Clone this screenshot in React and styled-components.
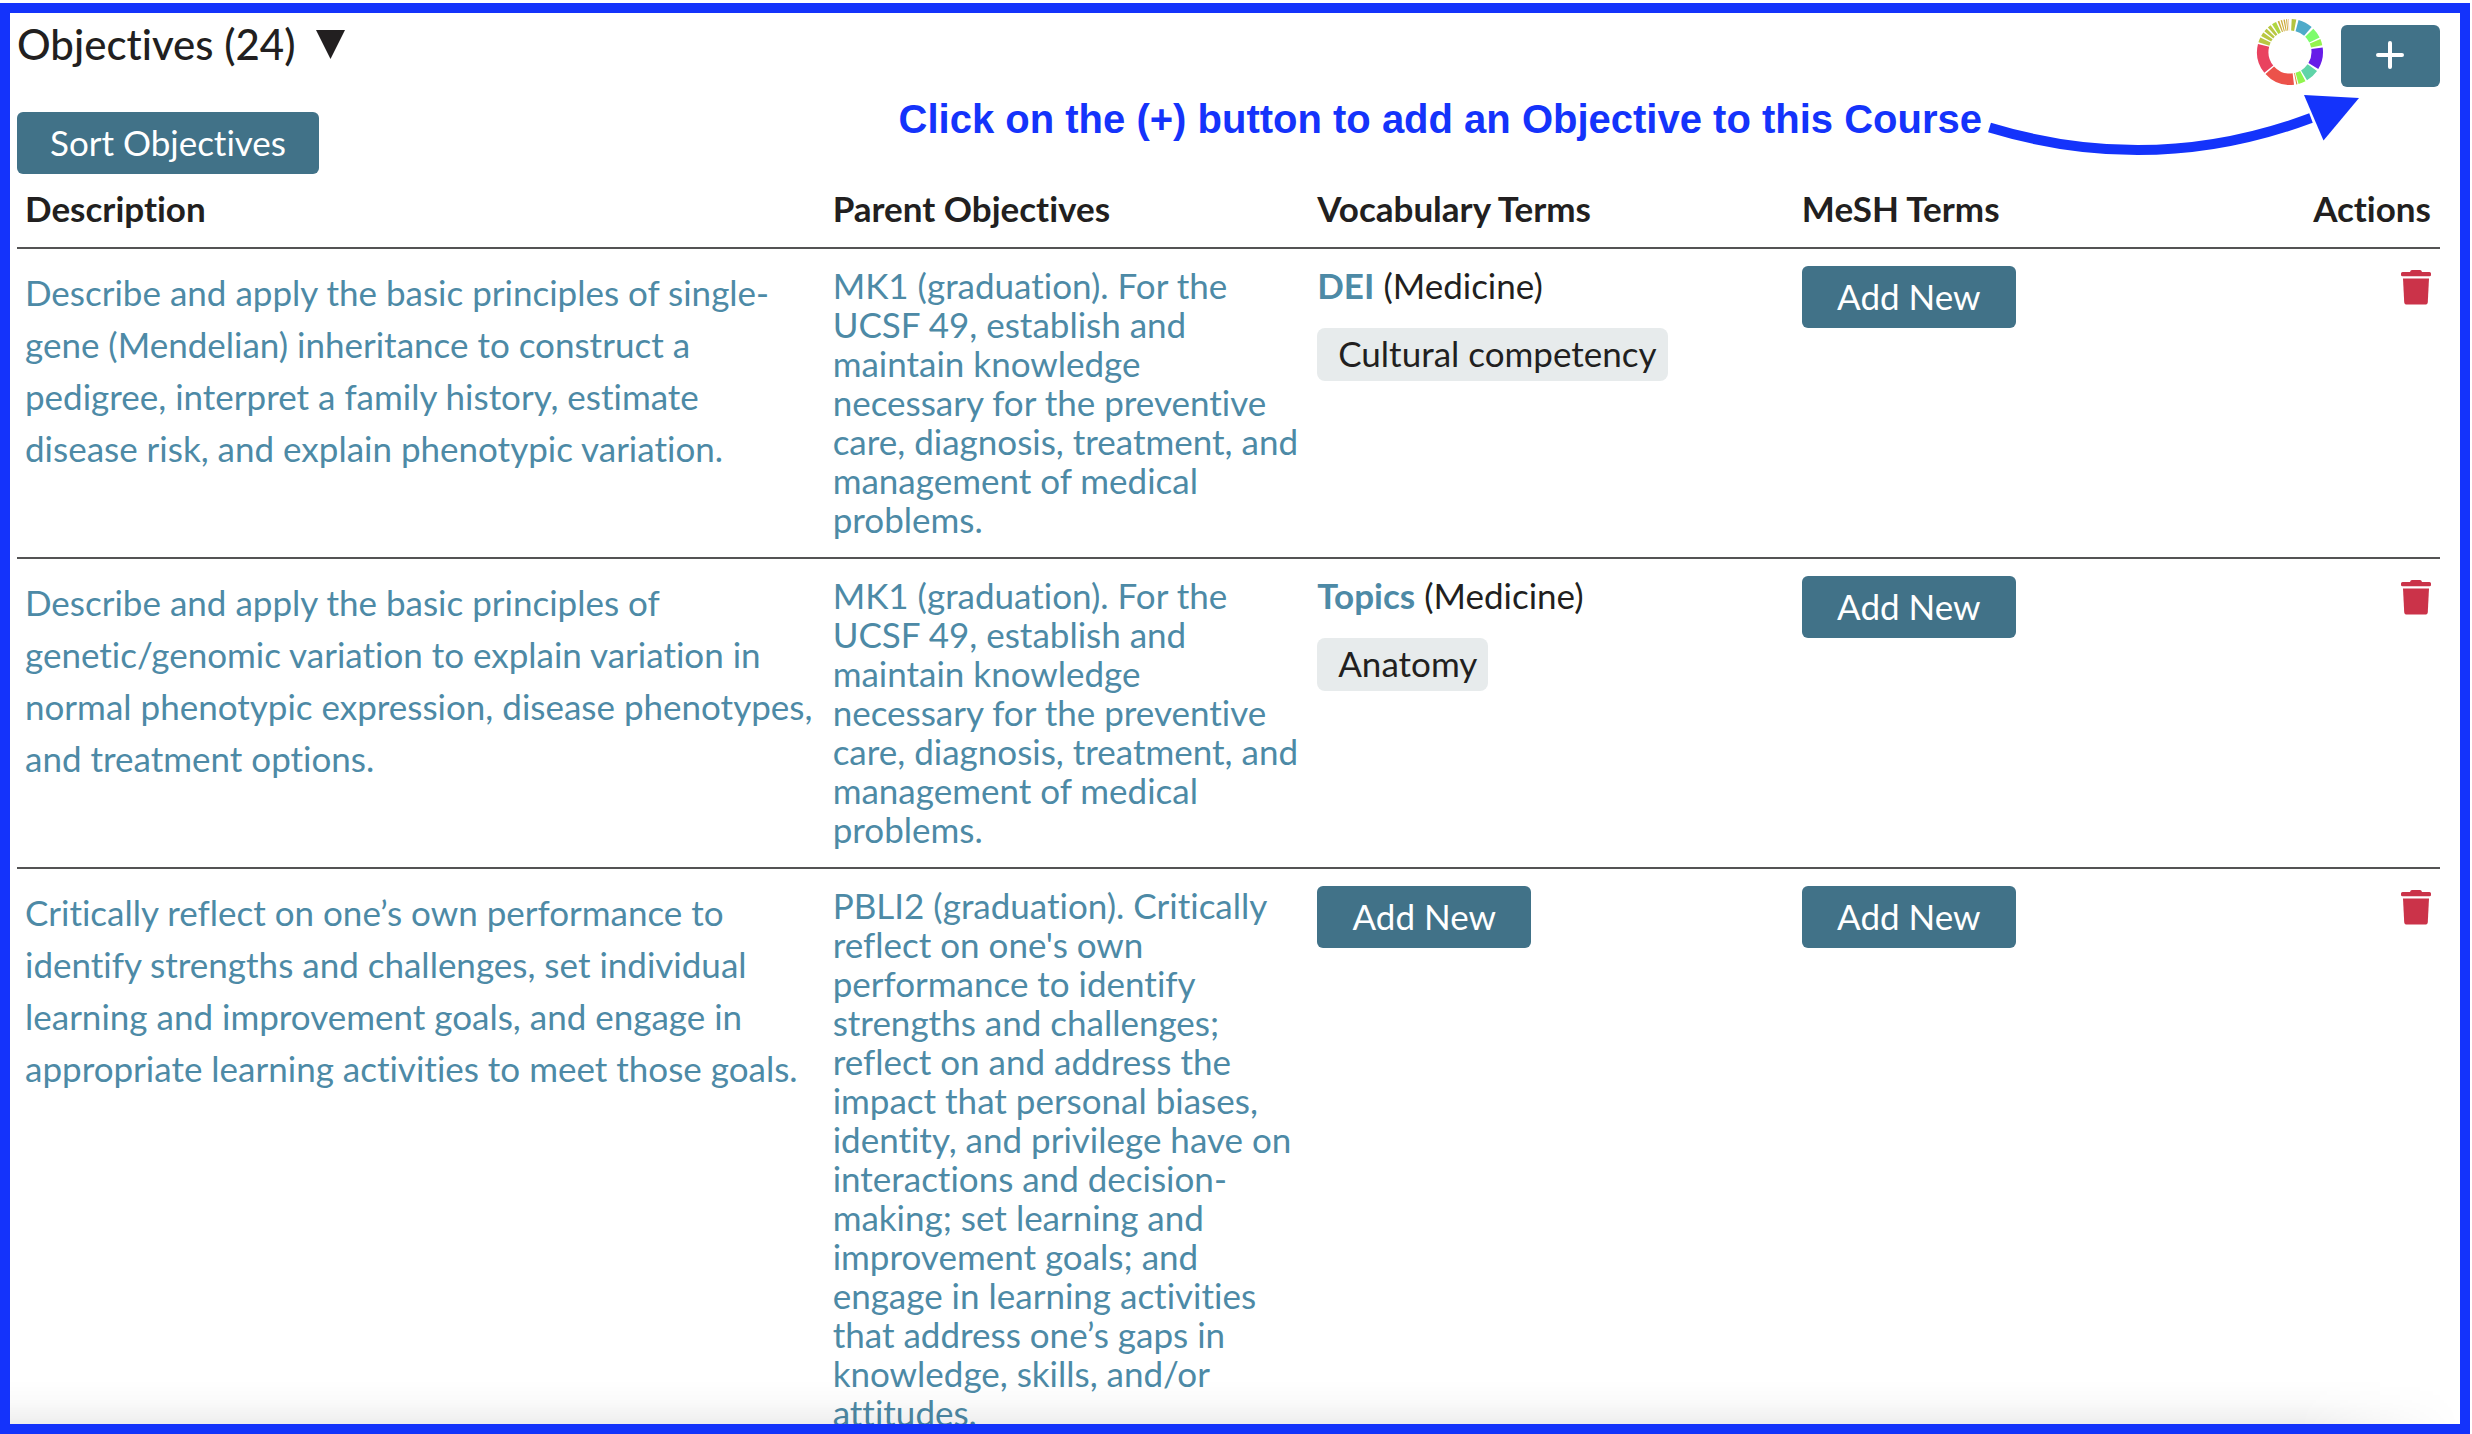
import React from "react";
import styled, { createGlobalStyle } from "styled-components";

const color = {
  ink: "#221f20",
  link: "#4d8aa6",
  button: "#417288",
  chip: "#e7ebec",
  rule: "#545354",
  danger: "#cb3349",
  callout: "#1433fb",
};

const GlobalStyle = createGlobalStyle`
  *, *::before, *::after { box-sizing: border-box; }
  body {
    margin: 0;
    background: #fff;
    color: ${color.ink};
    font: 35px/39px Lato, "Noto Sans", sans-serif;
    font-variant-ligatures: none;
  }
  button { font: inherit; font-variant-ligatures: inherit; cursor: pointer; }
`;

const Page = styled.div`
  height: 100vh;
  padding: 3px 2px 0 0;
`;

const Frame = styled.main`
  position: relative;
  height: 100%;
  overflow: hidden;
  padding: 6px 20px 0 7px;
  border: 10px solid ${color.callout};
`;

const BottomFade = styled.div`
  position: absolute;
  inset: auto 0 0 0;
  height: 44px;
  pointer-events: none;
  background: linear-gradient(to bottom, rgba(0, 0, 0, 0), rgba(0, 0, 0, 0.02) 50%, rgba(0, 0, 0, 0.065));
  mask-image: linear-gradient(to left, transparent, #000 160px);
`;

const Header = styled.header`
  display: flex;
  justify-content: space-between;
  align-items: flex-start;
`;

const Title = styled.h2`
  margin: 0;
  padding-top: 5px;
  font-size: 42px;
  line-height: 40px;
  font-weight: 500;
`;

const TitleToggle = styled.button`
  display: flex;
  align-items: center;
  gap: 20px;
  padding: 0;
  border: 0;
  background: none;
  color: inherit;
`;

const HeaderActions = styled.div`
  display: flex;
  align-items: flex-end;
  gap: 17px;
`;

const Button = styled.button`
  display: inline-flex;
  align-items: center;
  justify-content: center;
  min-width: ${(p) => (p.$compact ? "99px" : "214px")};
  height: 62px;
  padding: 0 33px 2px;
  border: 0;
  border-radius: 6px;
  background: ${color.button};
  color: #fff;
`;

const SortBar = styled.div`
  display: flex;
  margin-top: 25px;
`;

const Callout = styled.div`
  position: absolute;
  top: 81px;
  right: 101px;
  display: flex;
  align-items: flex-start;
  gap: 4px;
  color: ${color.callout};
  font: bold 40px/50px "Liberation Sans", Arial, sans-serif;
  white-space: nowrap;
  pointer-events: none;
`;

const Table = styled.table`
  width: 100%;
  table-layout: fixed;
  border-spacing: 0;
`;

const Th = styled.th`
  width: ${(p) => p.$width || "auto"};
  padding: 15px 9px 19px 8px;
  text-align: ${(p) => p.$align || "left"};
  font-weight: 700;
`;

const Td = styled.td`
  padding: 17px ${(p) => (p.$align ? "9px" : "8px")} 18px 8px;
  border-top: 2px solid ${color.rule};
  vertical-align: top;
  text-align: ${(p) => p.$align || "left"};
`;

const TextButton = styled.button`
  display: block;
  padding: 0;
  border: 0;
  background: none;
  color: ${color.link};
  text-align: left;
  line-height: ${(p) => (p.$loose ? "52px" : "39px")};
`;

const Vocabulary = styled.div`
  display: flex;
  gap: 9px;
`;

const VocabularyButton = styled(TextButton)`
  font-weight: 700;
`;

const Terms = styled.ul`
  display: flex;
  flex-wrap: wrap;
  margin: 23px 0 0;
  padding: 0;
  list-style: none;
`;

const Term = styled.li`
  padding: 0 11px 2px 21px;
  border-radius: 8px;
  background: ${color.chip};
  line-height: 51px;
`;

const IconButton = styled.button`
  display: inline-flex;
  padding: 4px 0 0;
  border: 0;
  background: none;
  color: ${color.danger};
`;

const TriangleIcon = () => (
  <svg width="29" height="29" viewBox="0 0 29 29" aria-hidden="true">
    <path d="M0 0H29L14.5 29Z" fill="currentColor" />
  </svg>
);

const PlusIcon = () => (
  <svg width="29" height="28" viewBox="0 0 29 28" aria-hidden="true">
    <path d="M14 2V26M2 14H26" stroke="currentColor" strokeWidth="4" strokeLinecap="round" />
  </svg>
);

const TrashIcon = () => (
  <svg width="30" height="35" viewBox="0 0 30 35" fill="currentColor" aria-hidden="true">
    <path d="M9 2Q9.500 0 11 0H19Q20.500 0 21 2H28.500Q30 2 30 3.500V5Q30 6.300 28.500 6.300H1.500Q0 6.300 0 5V3.500Q0 2 1.500 2Z" />
    <path d="M2 8.600H28L26.800 32Q26.600 34.600 24 34.600H6Q3.400 34.600 3.200 32Z" />
  </svg>
);

const slices = [
  [3, 11, "#b4c441"],
  [15, 41, "#4fabc9"],
  [45, 64, "#7dfc6b"],
  [67, 78, "#94f34f"],
  [82, 121, "#671ce8"],
  [125, 149, "#60d4a8"],
  [152, 165, "#90f54e"],
  [167, 169, "#e08a3a"],
  [173, 228, "#ec524a"],
  [231, 284, "#e9425f"],
  [287, 296, "#b9c742"],
  [299, 306, "#b9c742"],
  [309, 315, "#b9c742"],
  [318, 324, "#b9c742"],
  [327, 335, "#b0d640"],
  [338, 341, "#cbac3c"],
  [343.5, 346, "#cbac3c"],
  [348.5, 351, "#cdaa40"],
  [353, 355, "#cdaa40"],
  [357, 358, "#e2b077"],
];

const point = (deg, r) => {
  const a = (deg * Math.PI) / 180;
  return `${34 + r * Math.sin(a)} ${33 - r * Math.cos(a)}`;
};

const slicePath = ([from, to]) =>
  `M${point(from, 33)}A33 33 0 0 1 ${point(to, 33)}L${point(to, 21.5)}A21.5 21.5 0 0 0 ${point(from, 21.5)}Z`;

const DonutChart = () => (
  <svg width="68" height="68" viewBox="0 0 68 68" role="img" aria-label="Objectives chart">
    {slices.map((s) => (
      <path key={s[0]} d={slicePath(s)} fill={s[2]} />
    ))}
  </svg>
);

const ArrowIcon = () => (
  <svg width="373" height="68" viewBox="0 0 373 68" aria-hidden="true">
    <path d="M3.500 33.500Q167 83 325 24" fill="none" stroke="currentColor" strokeWidth="10" />
    <path d="M318 1L373 4L337.500 46.500Z" fill="currentColor" />
  </svg>
);

const mk1 =
  "MK1 (graduation). For the UCSF 49, establish and maintain knowledge necessary\u00a0for the preventive care, diagnosis, treatment, and management of medical problems.";

const objectives = [
  {
    description:
      "Describe and apply the basic principles of single-gene (Mendelian) inheritance to construct a pedigree, interpret a family history, estimate disease risk, and explain phenotypic variation.",
    parent: mk1,
    vocabulary: "DEI",
    terms: ["Cultural competency"],
  },
  {
    description:
      "Describe and apply the basic principles of genetic/genomic variation to explain variation in normal phenotypic expression, disease phenotypes, and treatment options.",
    parent: mk1,
    vocabulary: "Topics",
    terms: ["Anatomy"],
  },
  {
    description:
      "Critically reflect on one’s own performance to identify strengths and challenges, set individual learning and improvement goals, and engage in appropriate learning activities to meet those goals.",
    parent:
      "PBLI2 (graduation). Critically reflect on one's own performance to identify strengths and challenges; reflect on and address the impact that personal biases, identity, and privilege have on interactions and decision-making; set learning and improvement goals; and engage in learning activities that address one’s gaps in knowledge, skills, and/or attitudes.",
  },
];

function ObjectiveRow({ objective }) {
  return (
    <tr>
      <Td>
        <TextButton $loose>{objective.description}</TextButton>
      </Td>
      <Td>
        <TextButton>{objective.parent}</TextButton>
      </Td>
      <Td>
        {objective.vocabulary ? (
          <>
            <Vocabulary>
              <VocabularyButton>{objective.vocabulary}</VocabularyButton>
              <span>(Medicine)</span>
            </Vocabulary>
            <Terms>
              {objective.terms.map((term) => (
                <Term key={term}>{term}</Term>
              ))}
            </Terms>
          </>
        ) : (
          <Button>Add New</Button>
        )}
      </Td>
      <Td>
        <Button>Add New</Button>
      </Td>
      <Td $align="right">
        <IconButton aria-label="Remove objective">
          <TrashIcon />
        </IconButton>
      </Td>
    </tr>
  );
}

export default function App() {
  return (
    <Page>
      <GlobalStyle />
      <Frame>
        <Header>
          <Title>
            <TitleToggle aria-expanded="true">
              Objectives (24)
              <TriangleIcon />
            </TitleToggle>
          </Title>
          <HeaderActions>
            <DonutChart />
            <Button $compact aria-label="Add objective">
              <PlusIcon />
            </Button>
          </HeaderActions>
        </Header>
        <SortBar>
          <Button>Sort Objectives</Button>
        </SortBar>
        <Table>
          <thead>
            <tr>
              <Th $width="33.333%">Description</Th>
              <Th $width="20%">Parent Objectives</Th>
              <Th $width="20%">Vocabulary Terms</Th>
              <Th $width="20%">MeSH Terms</Th>
              <Th $align="right">Actions</Th>
            </tr>
          </thead>
          <tbody>
            {objectives.map((objective) => (
              <ObjectiveRow key={objective.description} objective={objective} />
            ))}
          </tbody>
        </Table>
        <Callout>
          <span>Click on the (+) button to add an Objective to this Course</span>
          <ArrowIcon />
        </Callout>
        <BottomFade />
      </Frame>
    </Page>
  );
}
